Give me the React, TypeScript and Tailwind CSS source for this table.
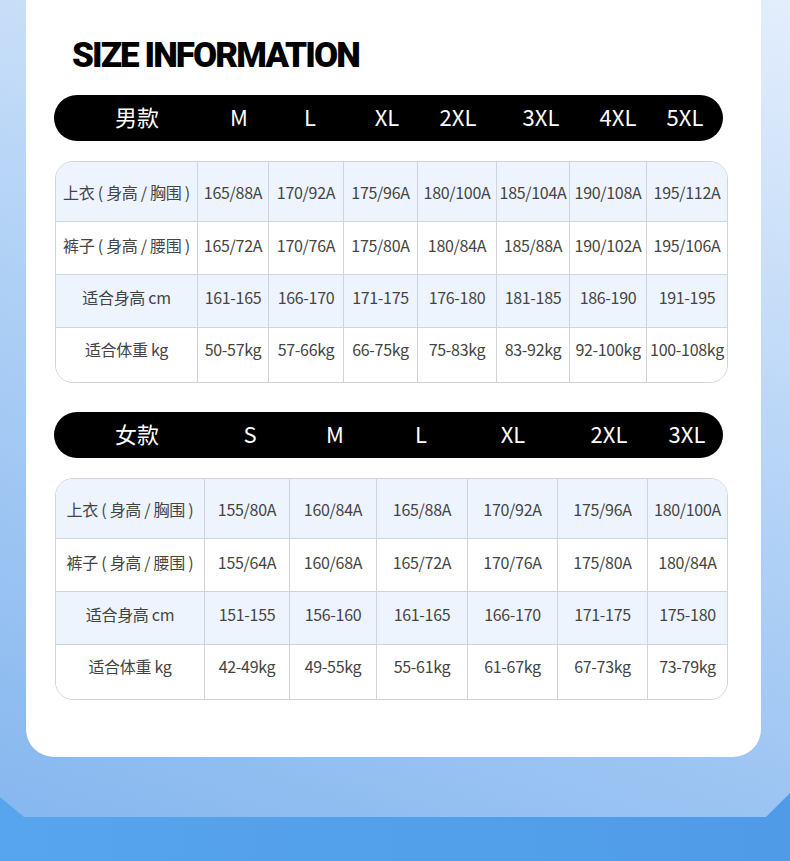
const men = {
  title: "男款",
  sizes: ["M", "L", "XL", "2XL", "3XL", "4XL", "5XL"],
  // widths of each slot in the pill, so labels sit over their columns
  slots: [166, 38, 104, 50, 92, 74, 80, 54],
  cols: "grid-cols-[141px_71px_75px_74px_79px_73px_77px_81px]",
  rows: [
    ["上衣 ( 身高 / 胸围 )", "165/88A", "170/92A", "175/96A", "180/100A", "185/104A", "190/108A", "195/112A"],
    ["裤子 ( 身高 / 腰围 )", "165/72A", "170/76A", "175/80A", "180/84A", "185/88A", "190/102A", "195/106A"],
    ["适合身高 cm", "161-165", "166-170", "171-175", "176-180", "181-185", "186-190", "191-195"],
    ["适合体重 kg", "50-57kg", "57-66kg", "66-75kg", "75-83kg", "83-92kg", "92-100kg", "100-108kg"],
  ],
};

const women = {
  title: "女款",
  sizes: ["S", "M", "L", "XL", "2XL", "3XL"],
  slots: [166, 60, 110, 62, 122, 70, 86],
  cols: "grid-cols-[148px_85px_87px_91px_90px_90px_80px]",
  rows: [
    ["上衣 ( 身高 / 胸围 )", "155/80A", "160/84A", "165/88A", "170/92A", "175/96A", "180/100A"],
    ["裤子 ( 身高 / 腰围 )", "155/64A", "160/68A", "165/72A", "170/76A", "175/80A", "180/84A"],
    ["适合身高 cm", "151-155", "156-160", "161-165", "166-170", "171-175", "175-180"],
    ["适合体重 kg", "42-49kg", "49-55kg", "55-61kg", "61-67kg", "67-73kg", "73-79kg"],
  ],
};

// row heights, and a little bottom padding so text sits where it does in the artwork
const rowClass = [
  "h-[59px] pt-[1px]",
  "h-[53px] pb-[6px]",
  "h-[53px] pb-[8px]",
  "h-[55px] pb-[12px]",
];

function SizePill({ title, sizes, slots }: { title: string; sizes: string[]; slots: number[] }) {
  const labels = [title, ...sizes];
  return (
    <div className="w-[669px] h-[46px] pb-[5px] rounded-full bg-black flex items-center overflow-hidden text-white text-[22px] leading-none">
      {labels.map((label, i) => (
        <span key={i} className="shrink-0 text-center" style={{ width: slots[i] }}>
          {label}
        </span>
      ))}
    </div>
  );
}

function SizeTable({ cols, rows }: { cols: string; rows: string[][] }) {
  return (
    <div className="w-[673px] border border-[#cfd3da] rounded-[18px] overflow-hidden">
      <div className={`grid ${cols}`}>
        {rows.map((row, r) =>
          row.map((cell, c) => (
            <div
              key={`${r}-${c}`}
              className={`${rowClass[r]} flex items-center justify-center whitespace-nowrap text-[16px] tracking-[-0.3px] text-[#444444] border-[#cfd3da] ${
                r % 2 === 0 ? "bg-[#edf4fe]" : "bg-white"
              } ${r > 0 ? "border-t" : ""} ${c > 0 ? "border-l" : ""}`}
            >
              {cell}
            </div>
          ))
        )}
      </div>
    </div>
  );
}

export default function App() {
  return (
    <div className="w-[790px] h-[861px] bg-[linear-gradient(90deg,#57a5ec,#4f9be8)] font-['Noto_Sans_CJK_SC','Noto_Sans',sans-serif]">
      <div className="h-[817px] pl-[26px] pr-[29px] bg-[linear-gradient(200deg,#e3eefc_0%,#b4d3f6_45%,#86b7ef_100%)] [clip-path:polygon(0_0,100%_0,100%_calc(100%_-_24px),calc(100%_-_24px)_100%,24px_100%,0_calc(100%_-_20px))]">
        <div className="h-[757px] bg-white rounded-b-[28px] pl-[28px] pt-[36px]">
          <h1 className="ml-[18px] h-[40px] font-['Roboto',sans-serif] font-black text-[35px] leading-[40px] tracking-[-0.055em] text-black">
            SIZE INFORMATION
          </h1>
          <div className="mt-[19px]">
            <SizePill title={men.title} sizes={men.sizes} slots={men.slots} />
          </div>
          <div className="mt-[20px] ml-[1px]">
            <SizeTable cols={men.cols} rows={men.rows} />
          </div>
          <div className="mt-[29px]">
            <SizePill title={women.title} sizes={women.sizes} slots={women.slots} />
          </div>
          <div className="mt-[20px] ml-[1px]">
            <SizeTable cols={women.cols} rows={women.rows} />
          </div>
        </div>
      </div>
    </div>
  );
}
